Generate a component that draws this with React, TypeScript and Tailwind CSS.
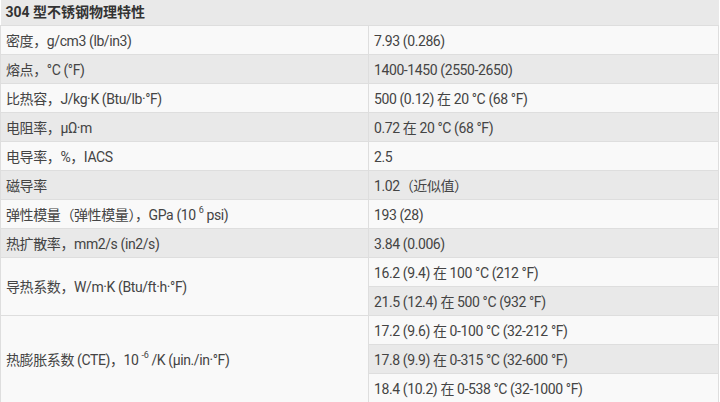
import React from "react";

const font = {
  fontFamily: '"Roboto", "Noto Sans CJK SC", sans-serif',
};

type Row = { label?: React.ReactNode; span?: number; value: React.ReactNode };

const rows: Row[] = [
  { label: "密度，g/cm3 (lb/in3)", value: "7.93 (0.286)" },
  { label: "熔点，°C (°F)", value: "1400-1450 (2550-2650)" },
  { label: "比热容，J/kg·K (Btu/lb·°F)", value: "500 (0.12) 在 20 °C (68 °F)" },
  { label: "电阻率，μΩ·m", value: "0.72 在 20 °C (68 °F)" },
  { label: "电导率，%，IACS", value: "2.5" },
  { label: "磁导率", value: "1.02（近似值）" },
  {
    label: (
      <>
        弹性模量（弹性模量），GPa (10 <sup className="text-[9px] align-baseline relative top-[-7px]">6</sup> psi)
      </>
    ),
    value: "193 (28)",
  },
  { label: "热扩散率，mm2/s (in2/s)", value: "3.84 (0.006)" },
  { label: "导热系数，W/m·K (Btu/ft·h·°F)", span: 2, value: "16.2 (9.4) 在 100 °C (212 °F)" },
  { value: "21.5 (12.4) 在 500 °C (932 °F)" },
  {
    label: (
      <>
        热膨胀系数 (CTE)，10 <sup className="text-[9px] align-baseline relative top-[-7px]">-6</sup> /K (µin./in·°F)
      </>
    ),
    span: 3,
    value: "17.2 (9.6) 在 0-100 °C (32-212 °F)",
  },
  { value: "17.8 (9.9) 在 0-315 °C (32-600 °F)" },
  { value: "18.4 (10.2) 在 0-538 °C (32-1000 °F)" },
];

export default function App() {
  return (
    <div className="w-[720px] h-[402px] bg-white overflow-hidden" style={font}>
      <table className="w-[719px] border-collapse text-[14px] text-[#444] table-fixed tracking-[-0.4px]">
        <colgroup>
          <col className="w-[368px]" />
          <col />
        </colgroup>
        <thead>
          <tr className="h-[25px] bg-[#e9e9e9]">
            <th
              colSpan={2}
              className="text-left font-bold text-[#333] px-[5px] py-0 border-b border-[#dedede] leading-none tracking-normal"
            >
              304 型不锈钢物理特性
            </th>
          </tr>
        </thead>
        <tbody>
          {rows.map((r, i) => {
            const bg = i % 2 === 0 ? "bg-[#f9f9f9]" : "bg-[#e9e9e9]";
            return (
              <tr key={i} className="h-[29px]">
                {r.label !== undefined && (
                  <td
                    rowSpan={r.span ?? 1}
                    className={`${bg} px-[5px] pt-[2px] pb-0 border border-[#dedede] whitespace-nowrap leading-none`}
                  >
                    {r.label}
                  </td>
                )}
                <td
                  className={`${bg} px-[5px] pt-[2px] pb-0 border border-[#dedede] whitespace-nowrap leading-none`}
                >
                  {r.value}
                </td>
              </tr>
            );
          })}
        </tbody>
      </table>
    </div>
  );
}
